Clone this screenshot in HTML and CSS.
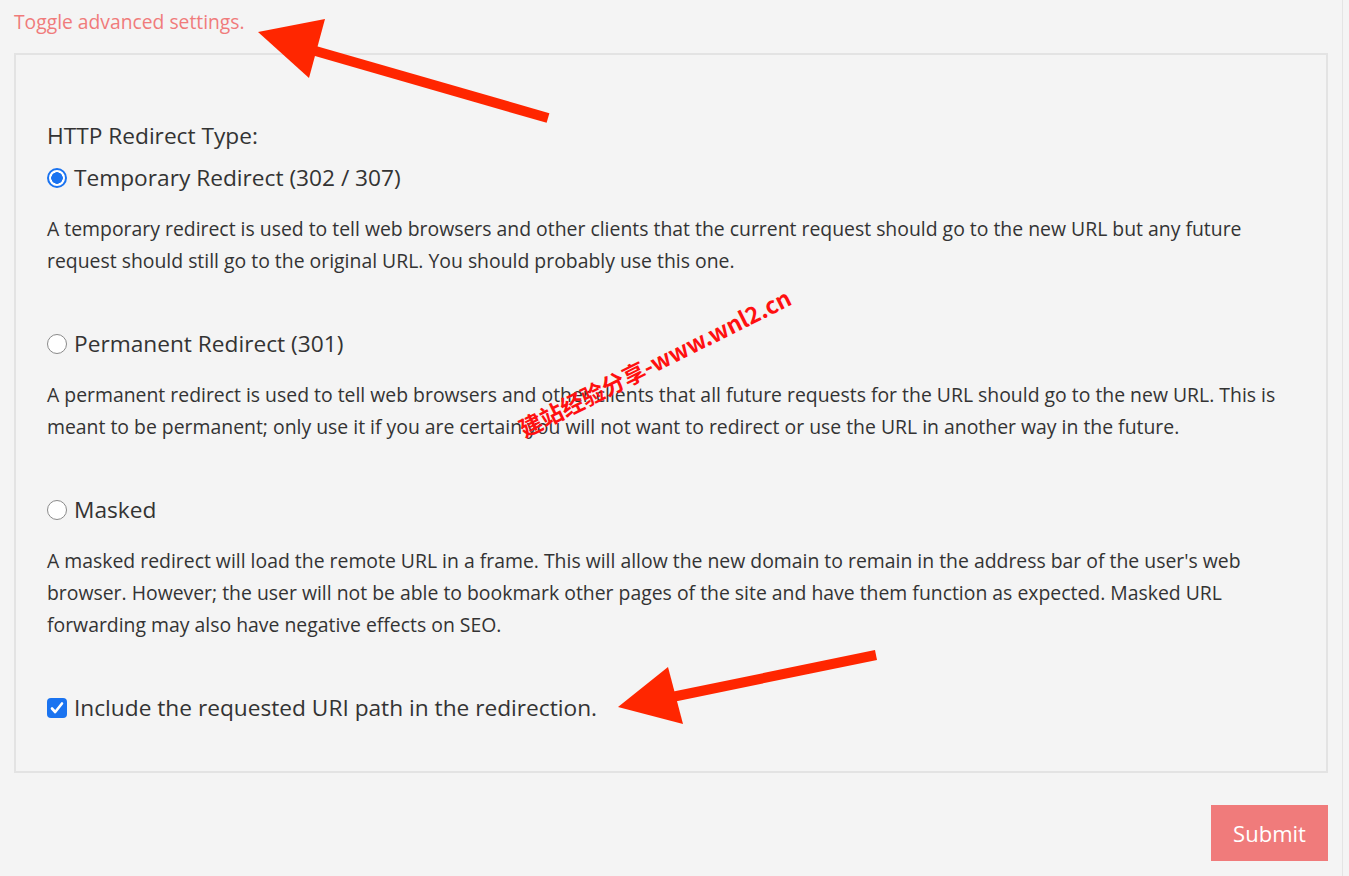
FILE: index.html
```html
<!DOCTYPE html>
<html lang="en">
  <head>
    <meta charset="UTF-8" />
    <meta name="viewport" content="width=device-width, initial-scale=1.0" />
    <title>Redirect Settings</title>
    <link rel="stylesheet" href="styles.css">
  </head>
  <body>
    <div class="page">
      <div class="toggle-row">
        <a class="toggle-link" href="#">Toggle advanced settings.</a>
      </div>

      <div class="advanced-panel">
        <div class="field-title">HTTP Redirect Type:</div>

        <div class="option">
          <label class="option-label">
            <input type="radio" name="redirect_type" value="temporary" checked />
            <span>Temporary Redirect (302 / 307)</span>
          </label>
          <p class="option-desc">A temporary redirect is used to tell web browsers and other clients that the current request should go to the new URL but any future request should still go to the original URL. You should probably use this one.</p>
        </div>

        <div class="option">
          <label class="option-label">
            <input type="radio" name="redirect_type" value="permanent" />
            <span>Permanent Redirect (301)</span>
          </label>
          <p class="option-desc">A permanent redirect is used to tell web browsers and other clients that all future requests for the URL should go to the new URL. This is meant to be permanent; only use it if you are certain you will not want to redirect or use the URL in another way in the future.</p>
        </div>

        <div class="option">
          <label class="option-label">
            <input type="radio" name="redirect_type" value="masked" />
            <span>Masked</span>
          </label>
          <p class="option-desc">A masked redirect will load the remote URL in a frame. This will allow the new domain to remain in the address bar of the user's web browser. However; the user will not be able to bookmark other pages of the site and have them function as expected. Masked URL forwarding may also have negative effects on SEO.</p>
        </div>

        <div class="option option-check">
          <label class="option-label">
            <input type="checkbox" name="include_path" checked />
            <span>Include the requested URI path in the redirection.</span>
          </label>
        </div>
      </div>

      <div class="actions">
        <button class="submit-btn" type="submit">Submit</button>
      </div>

      <!-- annotation overlay -->
      <svg class="annotations" width="1349" height="876" viewBox="0 0 1349 876">
        <line x1="548" y1="118" x2="312" y2="50" stroke="#ff2600" stroke-width="10" />
        <polygon points="258,32 325,19 309,78" fill="#ff2600" />
        <line x1="876" y1="655" x2="672" y2="697" stroke="#ff2600" stroke-width="10" />
        <polygon points="618,707 668,667 683,724" fill="#ff2600" />
      </svg>
      <div class="watermark">建站经验分享-www.wnl2.cn</div>
    </div>
  </body>
</html>
```

FILE: styles.css
```css
body {
  margin: 0;
  background-color: #f4f4f4;
  font-family: "Open Sans", "Noto Sans", Arial, sans-serif;
  color: #333;
}
.page {
  position: relative;
  width: 1343px;
  height: 876px;
  padding: 0 14px;
  box-sizing: border-box;
  border-right: 1px solid #e4e4e4;
}
.toggle-row {
  padding-top: 10px;
  margin-bottom: 19px;
  font-size: 19.3px;
  line-height: 24px;
}
.toggle-link {
  color: #f07b7b;
  text-decoration: none;
}
.advanced-panel {
  border: 2px solid #e3e3e3;
  padding: 67px 31px 48px 31px;
}
.field-title {
  font-size: 22.7px;
  line-height: 28px;
  margin-bottom: 13px;
}
.option + .option {
  margin-top: 52px;
}
.option-check {
  margin-top: 53px;
}
.option-label {
  display: flex;
  align-items: center;
  gap: 7px;
  font-size: 22.7px;
  line-height: 30px;
}
.option-desc {
  margin: 20px 0 0 0;
  font-size: 19.4px;
  line-height: 32px;
}
.option-label input {
  appearance: none;
  -webkit-appearance: none;
  margin: 0;
  width: 20px;
  height: 20px;
  flex: none;
  box-sizing: border-box;
  background-color: #fff;
}
.option-label input[type="radio"] {
  border: 1px solid #8a8a8a;
  border-radius: 50%;
}
.option-label input[type="radio"]:checked {
  border: 2px solid #1a73f0;
  background: radial-gradient(circle, #1a73f0 0 5.5px, #fff 6px);
}
.option-label input[type="checkbox"] {
  border-radius: 4px;
  background-color: #1a73f0;
  background-image: url("data:image/svg+xml,%3Csvg xmlns='http://www.w3.org/2000/svg' viewBox='0 0 20 20'%3E%3Cpath d='M5 10.5l3.2 3.5L15 5.5' fill='none' stroke='%23fff' stroke-width='2.6' stroke-linecap='round' stroke-linejoin='round'/%3E%3C/svg%3E");
  background-size: 100% 100%;
}
.actions {
  display: flex;
  justify-content: flex-end;
  margin-top: 32px;
}
.submit-btn {
  width: 117px;
  height: 56px;
  border: none;
  background-color: #f07b7b;
  color: #fff;
  font-family: "Open Sans", Arial, sans-serif;
  font-size: 22px;
  cursor: pointer;
}
.annotations {
  position: absolute;
  left: 0;
  top: 0;
  pointer-events: none;
}
.watermark {
  position: absolute;
  left: 520px;
  top: 415px;
  transform: rotate(-26.5deg);
  transform-origin: left center;
  color: #ff1010;
  font-family: "Noto Sans CJK SC", "Noto Sans", sans-serif;
  font-weight: 700;
  font-size: 23px;
  line-height: 28px;
  white-space: nowrap;
  pointer-events: none;
}
```
